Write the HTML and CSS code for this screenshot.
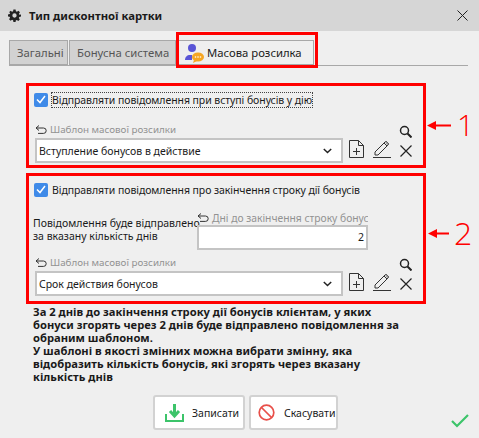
FILE: index.html
```html
<!DOCTYPE html>
<html lang="uk">
<head>
    <meta charset="UTF-8">
    <title>Тип дисконтної картки</title>
    <link rel="stylesheet" href="styles.css">
</head>
<body>
    <div class="window">
        <div class="titlebar">
            <svg class="gear" width="13" height="13" viewBox="0 0 24 24"><path fill="#222" fill-rule="evenodd" d="M10 1h4l.6 3.2 1.9.8L19.200 3.200l2.800 2.800-1.800 2.700.8 1.900L24 10v4l-3.200.6-.8 1.900 1.800 2.700-2.800 2.800-2.700-1.800-1.900.8L14 24h-4l-.6-3.200-1.900-.8-2.700 1.800L2 19l1.800-2.700-.8-1.900L0 14v-4l3.200-.6.8-1.900L2 6l2.800-2.800 2.700 1.800 1.900-.8zM12 8a4 4 0 1 0 0 8 4 4 0 0 0 0-8z"/></svg>
            <span class="title">Тип дисконтної картки</span>
            <svg class="close" width="11" height="11" viewBox="0 0 11 11"><path d="M.5.5l10 10M10.500.5l-10 10" stroke="#222" fill="none"/></svg>
        </div>

        <div class="tabs">
            <div class="tab general">Загальні</div>
            <div class="tab bonus">Бонусна система</div>
            <div class="tab active">
                <svg width="20" height="20" viewBox="0 0 20 20">
                    <circle cx="8" cy="5" r="4" fill="#5a55d6"/>
                    <path d="M1 17c0-3 2-5 5-5h2v5z" fill="#5a55d6"/>
                    <ellipse cx="14" cy="14" rx="6" ry="4.500" fill="#f5a623"/>
                    <path d="M10 17l-1 3 4-2z" fill="#f5a623"/>
                    <circle cx="11.500" cy="14" r=".8" fill="#fff"/><circle cx="14" cy="14" r=".8" fill="#fff"/><circle cx="16.500" cy="14" r=".8" fill="#fff"/>
                </svg>
                <span>Масова розсилка</span>
            </div>
        </div>

        <section class="group first">
            <label class="check focused"><span class="box"><svg width="10" height="9" viewBox="0 0 10 9"><path d="M1 4.500l3 3 5-6.500" stroke="#fff" stroke-width="1.500" fill="none"/></svg></span><span class="check-text">Відправляти повідомлення при вступі бонусів у дію</span></label>
            <div class="template">
                <div class="template-main">
                    <div class="field-label"><svg class="back" width="12" height="9" viewBox="0 0 12 9"><path d="M4 .5L1 3l3 2.500M1 3h7.500a2.700 2.700 0 0 1 0 5.400H3" stroke="#333" fill="none"/></svg>Шаблон масової розсилки</div>
                    <div class="combo"><span>Вступление бонусов в действие</span><svg width="9" height="6" viewBox="0 0 9 6"><path d="M.8 1l3.700 3.500L8.200 1" stroke="#222" stroke-width="1.500" fill="none"/></svg></div>
                </div>
                <svg class="new-doc" width="15" height="18" viewBox="0 0 15 18"><path d="M.5.5h9l5 5v12H.5zM9.500.5v5h5M7.500 8v7M4 11.500h7" stroke="#333" fill="none"/></svg>
                <svg class="pencil" width="18" height="18" viewBox="0 0 18 18"><path d="M2 12L12 2l1-1 3 3-11 11H2zM11 3l3 3M0 17.500h18" stroke="#333" fill="none"/><path d="M12 2l1-1 3 3-1.500 1.500z" fill="#999"/></svg>
                <div class="mini-tools">
                    <svg width="13" height="13" viewBox="0 0 13 13"><circle cx="5.500" cy="5.500" r="4" stroke="#222" stroke-width="1.500" fill="none"/><path d="M8.500 8.500l4 4" stroke="#222" stroke-width="2"/></svg>
                    <svg width="12" height="12" viewBox="0 0 12 12"><path d="M.5.500l11 11M11.500.500l-11 11" stroke="#222" stroke-width="1.200"/></svg>
                </div>
            </div>
        </section>

        <section class="group second">
            <label class="check"><span class="box"><svg width="10" height="9" viewBox="0 0 10 9"><path d="M1 4.500l3 3 5-6.500" stroke="#fff" stroke-width="1.500" fill="none"/></svg></span><span class="check-text">Відправляти повідомлення про закінчення строку дії бонусів</span></label>
            <div class="days">
                <div class="days-note">Повідомлення буде відправлено<br>за вказану кількість днів</div>
                <div class="days-field">
                    <div class="field-label clipped"><svg class="back" width="12" height="9" viewBox="0 0 12 9"><path d="M4 .5L1 3l3 2.500M1 3h7.500a2.700 2.700 0 0 1 0 5.400H3" stroke="#333" fill="none"/></svg><span>Дні до закінчення строку бонус</span></div>
                    <div class="number">2</div>
                </div>
            </div>
            <div class="template">
                <div class="template-main">
                    <div class="field-label"><svg class="back" width="12" height="9" viewBox="0 0 12 9"><path d="M4 .5L1 3l3 2.500M1 3h7.500a2.700 2.700 0 0 1 0 5.400H3" stroke="#333" fill="none"/></svg>Шаблон масової розсилки</div>
                    <div class="combo"><span>Срок действия бонусов</span><svg width="9" height="6" viewBox="0 0 9 6"><path d="M.8 1l3.700 3.500L8.200 1" stroke="#222" stroke-width="1.500" fill="none"/></svg></div>
                </div>
                <svg class="new-doc" width="15" height="18" viewBox="0 0 15 18"><path d="M.5.5h9l5 5v12H.5zM9.500.5v5h5M7.500 8v7M4 11.500h7" stroke="#333" fill="none"/></svg>
                <svg class="pencil" width="18" height="18" viewBox="0 0 18 18"><path d="M2 12L12 2l1-1 3 3-11 11H2zM11 3l3 3M0 17.500h18" stroke="#333" fill="none"/><path d="M12 2l1-1 3 3-1.500 1.500z" fill="#999"/></svg>
                <div class="mini-tools">
                    <svg width="13" height="13" viewBox="0 0 13 13"><circle cx="5.500" cy="5.500" r="4" stroke="#222" stroke-width="1.500" fill="none"/><path d="M8.500 8.500l4 4" stroke="#222" stroke-width="2"/></svg>
                    <svg width="12" height="12" viewBox="0 0 12 12"><path d="M.5.500l11 11M11.500.500l-11 11" stroke="#222" stroke-width="1.200"/></svg>
                </div>
            </div>
        </section>

        <p class="hint">За 2 днів до закінчення строку дії бонусів клієнтам, у яких<br>бонуси згорять через 2 днів буде відправлено повідомлення за<br>обраним шаблоном.<br>У шаблоні в якості змінних можна вибрати змінну, яка<br>відобразить кількість бонусів, які згорять через вказану<br>кількість днів</p>

        <div class="actions">
            <button class="btn save">
                <svg width="19" height="19" viewBox="0 0 19 19"><path d="M1 11v7h17v-7" stroke="#3cc46a" stroke-width="2" fill="none"/><path d="M9.500 1v11M5 8l4.500 5L14 8" stroke="#3cc46a" stroke-width="3" fill="none"/></svg>
                <span>Записати</span>
            </button>
            <button class="btn cancel">
                <svg width="17" height="17" viewBox="0 0 17 17"><circle cx="8.500" cy="8.500" r="7.300" stroke="#e8504a" stroke-width="1.700" fill="none"/><path d="M3.500 3.500l10 10" stroke="#e8504a" stroke-width="1.700"/></svg>
                <span>Скасувати</span>
            </button>
        </div>

        <!-- annotations drawn over the dialog -->
        <div class="tab-mark"></div>
        <div class="mark mark-one"><svg width="24" height="9" viewBox="0 0 24 9"><path d="M0 4.500L9 0v3.500h15v2H9V9z" fill="#f00"/></svg><span>1</span></div>
        <div class="mark mark-two"><svg width="21" height="9" viewBox="0 0 21 9"><path d="M0 4.500L9 0v3.500h12v2H9V9z" fill="#f00"/></svg><span>2</span></div>
        <svg class="done" width="18" height="14" viewBox="0 0 18 14"><path d="M1 7l5 5L17 1" stroke="#3cc46a" stroke-width="2.200" fill="none"/></svg>
    </div>
</body>
</html>
```
FILE: styles.css
```css
:root {
    --bg: #efefef;
    --line: #c4c4c4;
    --red: #ff0000;
    --muted: #929292;
    --text: #1a1a1a;
}

* {
    box-sizing: border-box;
}

body {
    margin: 0;
    font-family: "Noto Sans", sans-serif;
    font-size: 10.500px;
    color: var(--text);
}

.window {
    position: relative;
    width: 479px;
    height: 438px;
    background: var(--bg);
    overflow: hidden;
}

.titlebar {
    display: flex;
    align-items: center;
    height: 31px;
    padding: 0 11px 0 8px;
    background: #d6d6d6;
}

.title {
    margin-left: 8px;
    font-size: 11.300px;
    font-weight: 700;
}

.close {
    margin-left: auto;
}

.tabs {
    display: flex;
    align-items: flex-end;
    height: 25px;
    margin: 10px 11px 0 9px;
    border-bottom: 1px solid #a8a8a8;
    font-size: 11.300px;
}

.tab {
    display: flex;
    align-items: center;
    height: 25px;
    padding: 0 0 0 7px;
    background: #d2d2d2;
    border: 1px solid #a8a8a8;
    color: #555;
    white-space: nowrap;
}

.general {
    width: 59px;
    margin-right: 1px;
}

.bonus {
    width: 107px;
}

.tab.active {
    width: 137px;
    margin-left: 1px;
    padding-left: 6px;
    gap: 3px;
    background: var(--bg);
    color: var(--text);
}

.group {
    width: 400px;
    margin-left: 26px;
    padding: 6px 5px 0;
    border: 3px solid var(--red);
}

.first {
    height: 85px;
    margin-top: 17px;
}

.second {
    height: 131px;
    margin-top: 5px;
}

.check {
    display: flex;
    align-items: center;
    gap: 3px;
    height: 15px;
}

.box {
    display: flex;
    align-items: center;
    justify-content: center;
    width: 14px;
    height: 14px;
    background: #3f8ae8;
    border-radius: 2px;
}

.check-text {
    border: 1px dotted transparent;
    letter-spacing: -0.07px;
    white-space: nowrap;
}

.focused .check-text {
    border-color: #444;
}

.template {
    display: flex;
    align-items: flex-end;
    margin-top: 15px;
}

.template-main {
    width: 309px;
    padding-left: 1px;
}

.field-label {
    display: flex;
    align-items: center;
    gap: 3px;
    height: 15px;
    font-size: 9.800px;
    color: var(--muted);
    white-space: nowrap;
}

.back {
    flex-shrink: 0;
}

.combo {
    display: flex;
    align-items: center;
    justify-content: space-between;
    height: 25px;
    padding: 0 9px 0 2px;
    margin-top: 1px;
    background: #fff;
    border: 2px solid var(--line);
}

.new-doc {
    margin: 0 0 5px 6px;
}

.pencil {
    margin: 0 0 5px 9px;
}

.mini-tools {
    display: flex;
    flex-direction: column;
    align-items: center;
    gap: 7px;
    margin: 0 0 6px 8px;
}

.days {
    display: flex;
    align-items: flex-end;
    margin-top: 13px;
}

.days-note {
    width: 164px;
    margin-left: -1px;
    padding-bottom: 7px;
    line-height: 13px;
    white-space: nowrap;
}

.days-field {
    width: 171px;
}

.clipped {
    overflow: hidden;
    font-size: 10.300px;
}

.number {
    height: 25px;
    padding-right: 2px;
    background: #fff;
    border: 2px solid var(--line);
    text-align: right;
    line-height: 21px;
}

.second .template {
    margin-top: 5px;
}

.hint {
    margin: 1px 0 0 33px;
    font-size: 11.200px;
    font-weight: 700;
    line-height: 13px;
}

.actions {
    display: flex;
    gap: 4px;
    margin: 12px 0 0 153px;
}

.btn {
    display: flex;
    align-items: center;
    height: 35px;
    padding: 0;
    background: #fff;
    border: 2px solid #d2d2d2;
    border-radius: 3px;
    font: inherit;
    color: var(--text);
}

.save {
    width: 92px;
    padding-left: 10px;
    gap: 8px;
}

.cancel {
    width: 89px;
    padding-left: 7px;
    gap: 9px;
}

/* annotations */
.tab-mark {
    position: absolute;
    left: 176px;
    top: 32px;
    width: 142px;
    height: 36px;
    border: 3px solid var(--red);
}

.mark {
    position: absolute;
    display: flex;
    align-items: center;
    color: var(--red);
    font-family: "Open Sans", sans-serif;
    font-weight: 300;
    line-height: 40px;
}

.mark-one {
    left: 427px;
    top: 105px;
    gap: 6px;
    font-size: 30px;
}

.mark-two {
    left: 428px;
    top: 213px;
    gap: 5px;
    font-size: 32px;
}

.done {
    position: absolute;
    left: 451px;
    top: 414px;
}
```
